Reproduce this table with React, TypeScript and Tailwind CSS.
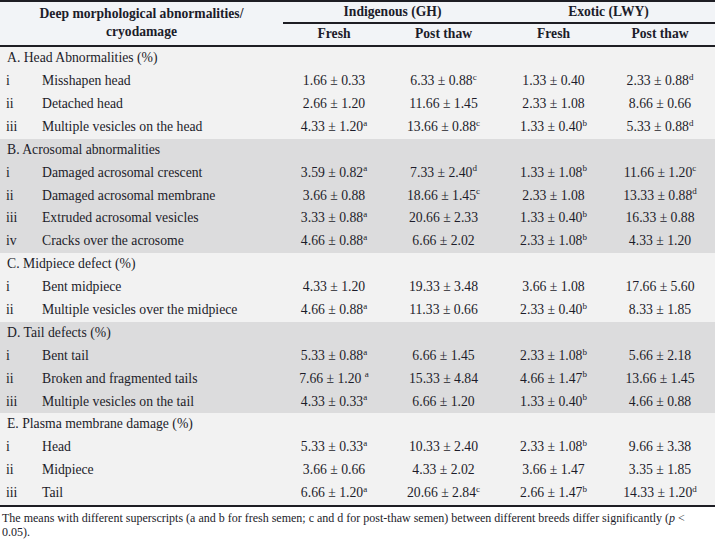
import React from "react";

type Row = { idx: string; label: string; v: [string, string?][] };
type Section = { title: string; bg: string; rows: Row[] };

const sections: Section[] = [
  {
    title: "A. Head Abnormalities (%)",
    bg: "bg-[#f2f2f2]",
    rows: [
      { idx: "i", label: "Misshapen head", v: [["1.66 ± 0.33"], ["6.33 ± 0.88", "c"], ["1.33 ± 0.40"], ["2.33 ± 0.88", "d"]] },
      { idx: "ii", label: "Detached head", v: [["2.66 ± 1.20"], ["11.66 ± 1.45"], ["2.33 ± 1.08"], ["8.66 ± 0.66"]] },
      { idx: "iii", label: "Multiple vesicles on the head", v: [["4.33 ± 1.20", "a"], ["13.66 ± 0.88", "c"], ["1.33 ± 0.40", "b"], ["5.33 ± 0.88", "d"]] },
    ],
  },
  {
    title: "B. Acrosomal abnormalities",
    bg: "bg-[#dcdcdd]",
    rows: [
      { idx: "i", label: "Damaged acrosomal crescent", v: [["3.59 ± 0.82", "a"], ["7.33 ± 2.40", "d"], ["1.33 ± 1.08", "b"], ["11.66 ± 1.20", "c"]] },
      { idx: "ii", label: "Damaged acrosomal membrane", v: [["3.66 ± 0.88"], ["18.66 ± 1.45", "c"], ["2.33 ± 1.08"], ["13.33 ± 0.88", "d"]] },
      { idx: "iii", label: "Extruded acrosomal vesicles", v: [["3.33 ± 0.88", "a"], ["20.66 ± 2.33"], ["1.33 ± 0.40", "b"], ["16.33 ± 0.88"]] },
      { idx: "iv", label: "Cracks over the acrosome", v: [["4.66 ± 0.88", "a"], ["6.66 ± 2.02"], ["2.33 ± 1.08", "b"], ["4.33 ± 1.20"]] },
    ],
  },
  {
    title: "C. Midpiece defect (%)",
    bg: "bg-[#f2f2f2]",
    rows: [
      { idx: "i", label: "Bent midpiece", v: [["4.33 ± 1.20"], ["19.33 ± 3.48"], ["3.66 ± 1.08"], ["17.66 ± 5.60"]] },
      { idx: "ii", label: "Multiple vesicles over the midpiece", v: [["4.66 ± 0.88", "a"], ["11.33 ± 0.66"], ["2.33 ± 0.40", "b"], ["8.33 ± 1.85"]] },
    ],
  },
  {
    title: "D. Tail defects (%)",
    bg: "bg-[#dcdcdd]",
    rows: [
      { idx: "i", label: "Bent tail", v: [["5.33 ± 0.88", "a"], ["6.66 ± 1.45"], ["2.33 ± 1.08", "b"], ["5.66 ± 2.18"]] },
      { idx: "ii", label: "Broken and fragmented tails", v: [["7.66 ± 1.20 ", "a"], ["15.33 ± 4.84"], ["4.66 ± 1.47", "b"], ["13.66 ± 1.45"]] },
      { idx: "iii", label: "Multiple vesicles on the tail", v: [["4.33 ± 0.33", "a"], ["6.66 ± 1.20"], ["1.33 ± 0.40", "b"], ["4.66 ± 0.88"]] },
    ],
  },
  {
    title: "E. Plasma membrane damage (%)",
    bg: "bg-[#f2f2f2]",
    rows: [
      { idx: "i", label: "Head", v: [["5.33 ± 0.33", "a"], ["10.33 ± 2.40"], ["2.33 ± 1.08", "b"], ["9.66 ± 3.38"]] },
      { idx: "ii", label: "Midpiece", v: [["3.66 ± 0.66"], ["4.33 ± 2.02"], ["3.66 ± 1.47"], ["3.35 ± 1.85"]] },
      { idx: "iii", label: "Tail", v: [["6.66 ± 1.20", "a"], ["20.66 ± 2.84", "c"], ["2.66 ± 1.47", "b"], ["14.33 ± 1.20", "d"]] },
    ],
  },
];

const cols = "grid grid-cols-[35px_248px_102px_117px_103px_110px]";

function Val({ v }: { v: [string, string?] }) {
  return (
    <div className="flex items-center justify-center whitespace-pre">
      <span>{v[0]}</span>
      {v[1] ? <span className="text-[9px] leading-none relative top-[-4px]">{v[1]}</span> : null}
    </div>
  );
}

export default function App() {
  return (
    <div
      className="w-[715px] h-[539px] bg-white text-[#1c1c2a] overflow-hidden"
      style={{ fontFamily: '"Liberation Serif", "Times New Roman", serif' }}
    >
      <div className="border-t-2 border-b-2 border-[#1e1e24] bg-[#f2f4f7] text-[13.6px] font-bold">
        <div className="grid grid-cols-[283px_219px_213px] grid-rows-[22px_21px]">
          <div className="row-span-2 flex flex-col items-center justify-center leading-[18px] pb-[1px]">
            <div>Deep morphological abnormalities/</div>
            <div>cryodamage</div>
          </div>
          <div className="flex items-center justify-center border-b-2 border-[#1e1e24]">Indigenous (GH)</div>
          <div className="flex items-center justify-center border-b-2 border-[#1e1e24]">Exotic (LWY)</div>
          <div className="grid grid-cols-[102px_117px]">
            <div className="flex items-center justify-center">Fresh</div>
            <div className="flex items-center justify-center">Post thaw</div>
          </div>
          <div className="grid grid-cols-[103px_110px]">
            <div className="flex items-center justify-center">Fresh</div>
            <div className="flex items-center justify-center">Post thaw</div>
          </div>
        </div>
      </div>
      <div className="text-[13.7px] border-b-2 border-[#1e1e24]">
        {sections.map((s) => (
          <div key={s.title} className={s.bg}>
            <div className="h-[22.9px] flex items-center pl-[7px]">{s.title}</div>
            {s.rows.map((r) => (
              <div key={r.label} className={`${cols} h-[22.9px] items-center`}>
                <div className="pl-[6px]">{r.idx}</div>
                <div className="pl-[7px]">{r.label}</div>
                {r.v.map((v, i) => (
                  <Val key={i} v={v} />
                ))}
              </div>
            ))}
          </div>
        ))}
      </div>
      <div className="w-[705px] text-[12px] leading-[14px] pl-[2px] pt-[4px]">
        The means with different superscripts (a and b for fresh semen; c and d for post-thaw semen) between different breeds differ significantly (<i>p</i> &lt; 0.05).
      </div>
    </div>
  );
}
